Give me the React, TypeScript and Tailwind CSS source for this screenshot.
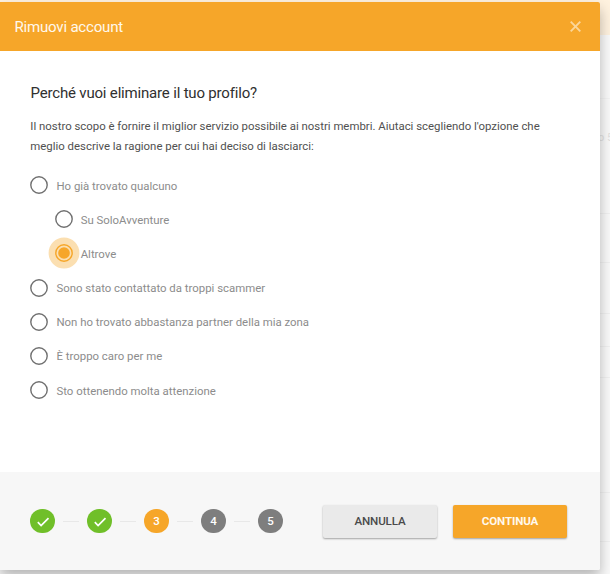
import React from "react";

type Option = { label: string; nested?: boolean; selected?: boolean };

const options: Option[] = [
  { label: "Ho già trovato qualcuno" },
  { label: "Su SoloAvventure", nested: true },
  { label: "Altrove", nested: true, selected: true },
  { label: "Sono stato contattato da troppi scammer" },
  { label: "Non ho trovato abbastanza partner della mia zona" },
  { label: "È troppo caro per me" },
  { label: "Sto ottenendo molta attenzione" },
];

function Radio({ selected }: { selected?: boolean }) {
  return (
    <svg className="-m-[7px] size-8 shrink-0" viewBox="0 0 32 32">
      {selected && <circle cx="16" cy="16" r="15.4" fill="#fbdfb1" />}
      <circle cx="16" cy="16" r="8.2" fill="none" stroke={selected ? "#f6a629" : "#707070"} strokeWidth="1.4" />
      {selected && <circle cx="16" cy="16" r="5.8" fill="#f6a629" />}
    </svg>
  );
}

function OptionRow({ option }: { option: Option }) {
  return (
    <label className={`flex h-[34.17px] items-center gap-[8.2px] ${option.nested ? "pl-[54.5px]" : "pl-[30.3px]"}`}>
      <Radio selected={option.selected} />
      <span className="whitespace-nowrap pt-[2px] text-[11.4px] text-[#8c8c8c]">{option.label}</span>
    </label>
  );
}

function Step({ n }: { n: number }) {
  const color = n < 3 ? "bg-[#70bf29]" : n === 3 ? "bg-[#f6a629]" : "bg-[#7e7e7e]";
  return (
    <div className={`flex size-[24.6px] shrink-0 items-center justify-center rounded-full pt-px text-[11.5px] font-medium text-white ${color}`}>
      {n < 3 ? (
        <svg className="size-4" viewBox="0 0 16 16" fill="none" stroke="white" strokeWidth="1.7">
          <path d="M2.8 8.2 6.1 11.5 13.5 4.1" />
        </svg>
      ) : (
        n
      )}
    </div>
  );
}

export default function App() {
  return (
    <div className="relative h-[574px] w-[610px] overflow-hidden bg-[#fafafa] pt-[2px] font-[Roboto,sans-serif]">
      <div className="absolute inset-x-0 top-0 h-[35px] bg-[#fff2df]" />
      <div className="absolute right-0 top-[98px] h-px w-[10px] bg-[#f4f4f4]" />
      <div className="absolute left-[598px] top-[130px] whitespace-nowrap text-[11px] text-[#e2e2e2]">o 5</div>
      {["top-[213px]", "top-[262px]", "top-[313px]", "top-[346px]", "top-[377px]", "top-[492px]", "top-[541px]"].map((top) => (
        <div key={top} className={`absolute right-0 h-px w-[10px] bg-[#f1f1f1] ${top}`} />
      ))}
      <main className="relative flex h-[568px] w-[600px] flex-col rounded-r-[2px] bg-white shadow-[0_7px_14px_rgba(0,0,0,0.28)]">
        <header className="flex h-[49px] shrink-0 items-center justify-between rounded-tr-[2px] bg-[#f6a629] pl-[14.4px] pr-[19px] text-[15.1px] tracking-[-0.22px] text-[#fff8ec]">
          <h1 className="pt-px">Rimuovi account</h1>
          <svg className="size-[11px]" viewBox="0 0 11 11" stroke="#fbd69a" strokeWidth="1.9">
            <path d="m.7.7 9.6 9.6m0-9.6L.7 10.3" />
          </svg>
        </header>
        <section className="h-[421px] shrink-0 pt-[32.4px]">
          <h2 className="whitespace-nowrap pl-[30.5px] text-[15px] leading-[21px] tracking-[-0.18px] text-[#303030]">Perché vuoi eliminare il tuo profilo?</h2>
          <p className="whitespace-nowrap pl-[30.3px] pt-[11.5px] text-[11.4px] leading-[20.4px] text-[#505050]">
            Il nostro scopo è fornire il miglior servizio possibile ai nostri membri. Aiutaci scegliendo l'opzione che
            <br />
            meglio descrive la ragione per cui hai deciso di lasciarci:
          </p>
          <div className="pt-[11.4px]">
            {options.map((option) => <OptionRow key={option.label} option={option} />)}
          </div>
        </section>
        <footer className="flex flex-1 items-center rounded-br-[2px] bg-[#f7f7f7] pl-[30.4px]">
          <div className="flex w-[292.6px] shrink-0 items-center">
            {[1, 2, 3, 4, 5].map((n) => (
              <React.Fragment key={n}>
                {n > 1 && <div className="mx-[8.2px] h-px w-4 shrink-0 bg-[#e8e8e8]" />}
                <Step n={n} />
              </React.Fragment>
            ))}
          </div>
          <button className="h-[33px] w-[114px] shrink-0 rounded-[2px] bg-[#eaeaea] pt-[2px] text-[11.6px] font-medium tracking-[-0.12px] text-[#4a4a4a] shadow-[0_1px_2px_rgba(0,0,0,0.35)]">ANNULLA</button>
          <button className="ml-4 h-[33px] w-[114px] shrink-0 rounded-[2px] bg-[#f6a629] pt-[2px] text-[11.6px] font-bold tracking-[-0.15px] text-[#fff8ec] shadow-[0_1px_2px_rgba(0,0,0,0.35)]">CONTINUA</button>
        </footer>
      </main>
    </div>
  );
}
